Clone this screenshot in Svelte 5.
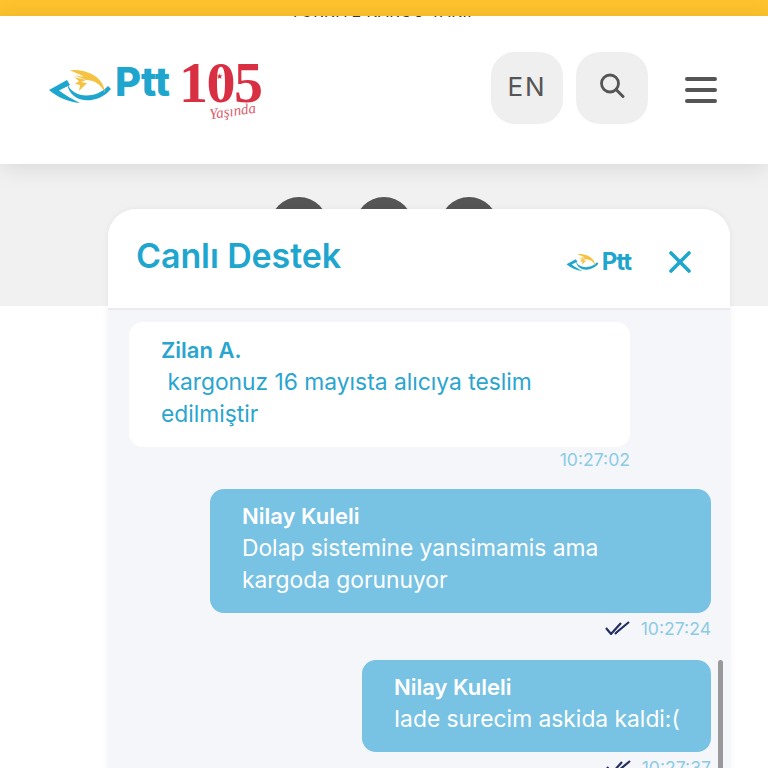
<script>
	const messages = [
		{ id: 1, from: 'Zilan A.', lines: ['\u00a0kargonuz 16 mayısta alıcıya teslim', 'edilmiştir'], time: '10:27:02', mine: false },
		{ id: 2, from: 'Nilay Kuleli', lines: ['Dolap sistemine yansimamis ama', 'kargoda gorunuyor'], time: '10:27:24', mine: true },
		{ id: 3, from: 'Nilay Kuleli', lines: ['Iade surecim askida kaldi:('], time: '10:27:37', mine: true, short: true }
	];
</script>

{#snippet bird(w)}
	<svg class="bird" width={w} viewBox="0 0 64 36" height={w * 36 / 64}>
		<path d="M1 22 L19 12 L22 17 L11 22.5 C17 27 24 31 32 35 C20 34 9 29 1 22 Z" fill="#1fa6cf" />
		<path d="M19 15 C24 30 47 32 60 18 L63 21 C50 37 22 37 19 15 Z" fill="#1fa6cf" />
		<path d="M22 2 C38 1 56 8 57 25 C53 16 46 12 38 12 L26 7 L36 9 C32 6 27 5 22 2 Z" fill="#f5c242" />
		<path d="M26 9 L38 12 L33 14 L39 15 L31 23 L32 17 L27 16 L31 13 Z" fill="#f5c242" />
	</svg>
{/snippet}

{#snippet checks()}
	<svg class="checks" viewBox="0 0 26 14" width="26" height="14">
		<path d="M1 7 L6 13 L16 2 M10 13 L12 11 L24 1" fill="none" stroke="#23305f" stroke-width="2.2" />
	</svg>
{/snippet}

<div class="page">
	<div class="topbar"></div>

	<header class="header">
		<div class="scrolled"><span>TÜRKİYE KARGO TAKİP</span></div>
		<div class="header-row">
			<div class="logo">
				{@render bird(64)}
				<span class="ptt">Ptt</span>
				<span class="years">
					<span class="num">105</span>
					<span class="star">★</span>
					<span class="script">Yaşında</span>
				</span>
			</div>
			<div class="actions">
				<button class="square lang">EN</button>
				<button class="square" aria-label="Ara">
					<svg viewBox="0 0 26 26" width="26" height="26">
						<circle cx="11" cy="10.5" r="8.5" fill="none" stroke="#555" stroke-width="2.8" />
						<path d="M17 16.5 L24 23.5" stroke="#555" stroke-width="3" stroke-linecap="round" />
					</svg>
				</button>
				<button class="menu" aria-label="Menü"><i></i><i></i><i></i></button>
			</div>
		</div>
	</header>

	<section class="band">
		<span class="dot"></span>
		<span class="dot"></span>
		<span class="dot"></span>
	</section>

	<aside class="chat">
		<div class="chat-head">
			<h2>Canlı Destek</h2>
			<div class="chat-logo">
				{@render bird(33)}
				<span class="ptt small">Ptt</span>
			</div>
			<button class="close" aria-label="Kapat">
				<svg viewBox="0 0 22 22" width="22" height="22">
					<path d="M2 2 L20 20 M20 2 L2 20" stroke="#1fa6cf" stroke-width="3.6" stroke-linecap="round" />
				</svg>
			</button>
		</div>
		<div class="chat-body">
			{#each messages as m (m.id)}
				<div class="msg" class:mine={m.mine}>
					<div class="bubble" class:short={m.short}>
						<div class="name">{m.from}</div>
						{#each m.lines as line}
							<div class="line">{line}</div>
						{/each}
					</div>
					<div class="meta">
						{#if m.mine}{@render checks()}{/if}
						<span>{m.time}</span>
					</div>
				</div>
			{/each}
		</div>
		<div class="scrollbar"></div>
	</aside>
</div>

<style>
	:global(body) {
		margin: 0;
		background: #fff;
	}

	.page {
		width: 768px;
		height: 768px;
		overflow: hidden;
		position: relative;
		font-family: Inter, "Open Sans", sans-serif;
	}

	.topbar {
		height: 16px;
		background: #fdc22d;
	}

	.header {
		height: 148px;
		background: #fff;
		box-shadow: 0 4px 22px rgba(0, 0, 0, 0.1);
		position: relative;
		box-sizing: border-box;
	}

	.scrolled {
		height: 4px;
		overflow: hidden;
		display: flex;
		justify-content: center;
		align-items: flex-end;
	}

	.scrolled span {
		font-size: 16px;
		line-height: 17px;
		letter-spacing: 0.5px;
		color: #333;
	}

	.header-row {
		display: flex;
		align-items: flex-start;
		justify-content: space-between;
		padding: 32px 51px 0 48px;
	}

	.logo {
		display: flex;
		align-items: flex-start;
		padding-top: 8px;
	}

	.bird {
		display: block;
		flex: none;
		margin-top: 8px;
	}

	.ptt {
		font-family: Inter, sans-serif;
		font-weight: 800;
		font-size: 40px;
		line-height: 44px;
		color: #1fa6cf;
		margin-left: 3px;
	}

	.years {
		position: relative;
		margin-left: 9px;
		margin-top: -5px;
		width: 82px;
		height: 60px;
		color: #d92f42;
	}

	.num {
		font-family: "Liberation Serif", serif;
		font-weight: 700;
		font-size: 58px;
		line-height: 56px;
		letter-spacing: -1.5px;
	}

	.star {
		position: absolute;
		left: 37px;
		top: 17px;
		font-size: 7px;
		line-height: 10px;
	}

	.script {
		position: absolute;
		left: 30px;
		top: 49px;
		font-family: "Liberation Serif", serif;
		font-style: italic;
		font-size: 15px;
		line-height: 14px;
		transform: rotate(-8deg);
		color: #d9606f;
	}

	.actions {
		display: flex;
		align-items: flex-start;
		gap: 13px;
	}

	.square {
		width: 72px;
		height: 72px;
		border: 0;
		border-radius: 24px;
		background: #efefef;
		display: flex;
		align-items: center;
		justify-content: center;
		padding: 0 0 4px;
	}

	.lang {
		font-family: Inter, sans-serif;
		font-size: 26px;
		letter-spacing: 2px;
		color: #555;
	}

	.menu {
		width: 32px;
		height: 26px;
		margin: 25px 0 0 24px;
		padding: 0;
		border: 0;
		background: none;
		display: flex;
		flex-direction: column;
		justify-content: space-between;
	}

	.menu i {
		display: block;
		height: 4px;
		border-radius: 2px;
		background: #555;
	}

	.band {
		height: 142px;
		background: #f1f1f1;
		display: flex;
		justify-content: center;
		gap: 27px;
		padding: 33px 0 0 0;
		box-sizing: border-box;
	}

	.dot {
		width: 58px;
		height: 58px;
		border-radius: 50%;
		background: #555;
	}

	.chat {
		position: absolute;
		left: 108px;
		top: 209px;
		width: 622px;
		height: 620px;
		border-radius: 28px 28px 0 0;
		background: #f5f6fa;
		box-shadow: 0 0 6px rgba(0, 0, 0, 0.06);
		overflow: hidden;
	}

	.chat-head {
		height: 101px;
		box-sizing: border-box;
		background: #fff;
		border-bottom: 2px solid #e9e9ee;
		display: flex;
		align-items: flex-start;
		padding: 27px 39px 0 28px;
	}

	h2 {
		margin: 0;
		flex: 1;
		font-size: 34px;
		line-height: 40px;
		font-weight: 600;
		letter-spacing: -0.1px;
		color: #1fa6cf;
	}

	.chat-logo {
		display: flex;
		align-items: flex-start;
		margin-top: 11px;
	}

	.chat-logo .bird {
		margin-top: 6px;
	}

	.ptt.small {
		font-size: 24px;
		line-height: 30px;
		margin-left: 3px;
		letter-spacing: -1px;
		font-weight: 700;
	}

	.close {
		width: 22px;
		height: 22px;
		padding: 0;
		border: 0;
		background: none;
		margin: 15px 0 0 38px;
	}

	.chat-body {
		padding: 12px 19px 0 21px;
		font-size: 22.8px;
		color: #2aa5cf;
	}

	.msg {
		display: flex;
		flex-direction: column;
		align-items: flex-start;
		margin-bottom: 18px;
	}

	.msg.mine {
		align-items: flex-end;
		margin-bottom: 20px;
	}

	.bubble {
		width: 501px;
		box-sizing: border-box;
		padding: 12px 32px 17px;
		background: #fff;
		border-radius: 14px;
		line-height: 32px;
	}

	.mine .bubble {
		background: #78c2e4;
		color: #fff;
		padding-top: 11px;
	}

	.bubble.short {
		width: 349px;
	}

	.name {
		font-weight: 600;
		font-size: 22px;
	}

	.line {
		white-space: nowrap;
	}

	.meta {
		width: 501px;
		display: flex;
		justify-content: flex-end;
		align-items: center;
		gap: 10px;
		height: 24px;
		font-size: 17.6px;
		color: #8ccbe4;
	}

	.mine .meta {
		margin-top: 3px;
	}

	.scrollbar {
		position: absolute;
		left: 610px;
		top: 451px;
		width: 5px;
		height: 160px;
		border-radius: 3px;
		background: #999;
	}
</style>
